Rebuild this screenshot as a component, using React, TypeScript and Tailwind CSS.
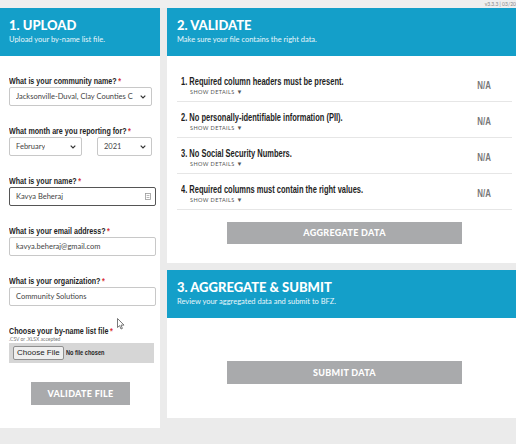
import type { ReactNode } from "react";

const blue = "bg-[#149fc9]";
// squeezed Liberation Sans bold stands in for the condensed label face
const narrow = "inline-block whitespace-nowrap font-['Liberation_Sans',Arial,sans-serif] font-bold scale-x-[0.75]";
const heavy = "font-['Lato',sans-serif] font-black";
const body = "font-['Lato','Open_Sans',sans-serif]";

const checks = [
  "1. Required column headers must be present.",
  "2. No personally-identifiable information (PII).",
  "3. No Social Security Numbers.",
  "4. Required columns must contain the right values."
];

const Header = ({ title, sub, padX }: { title: string; sub: string; padX: string }) => (
  <div className={`${blue} h-[48px] ${padX} pt-[9px] text-white`}>
    <div className={`${heavy} text-[13px] leading-[16px]`}>{title}</div>
    <div className={`${body} mt-[2px] text-[7.5px] leading-[10px] text-[#e8f6fb]`}>{sub}</div>
  </div>
);

const Label = ({ children }: { children: ReactNode }) => (
  <div className="h-[12px] text-[9.5px] leading-[12px] text-[#1e1e1e]">
    <span className={`${narrow} origin-left`}>
      {children}
      <span className="ml-[2px] text-[#d9343a]">*</span>
    </span>
  </div>
);

const Chevron = () => (
  <svg width="6" height="4" viewBox="0 0 6 4" className="shrink-0">
    <path d="M0.7 0.7 L3 3 L5.3 0.7" fill="none" stroke="#333" strokeWidth="1.2" />
  </svg>
);

const Select = ({ value, width }: { value: string; width: string }) => (
  <div
    className={`${width} flex h-[19px] items-center justify-between rounded-[2px] border border-[#c8c8c8] bg-white pl-[6px] pr-[5px]`}
  >
    <span className={`${body} truncate text-[7.5px] text-[#444]`}>{value}</span>
    <Chevron />
  </div>
);

const TextInput = ({ value, focused }: { value: string; focused?: boolean }) => (
  <div
    className={`flex h-[19px] w-[147px] items-center justify-between rounded-[2px] border bg-white pl-[6px] pr-[4px] ${
      focused ? "border-[#555]" : "border-[#c8c8c8]"
    }`}
  >
    <span className={`${body} text-[7.5px] text-[#444]`}>{value}</span>
    {focused ? (
      <svg width="6" height="7" viewBox="0 0 6 7">
        <rect x="0.5" y="0.5" width="5" height="6" fill="none" stroke="#999" strokeWidth="0.8" />
        <path d="M1.6 2.5 H4.4 M1.6 4.5 H4.4" stroke="#999" strokeWidth="0.7" />
      </svg>
    ) : null}
  </div>
);

const GrayButton = ({ label, width }: { label: string; width: string }) => (
  <div
    className={`${width} flex h-[23px] items-center justify-center bg-[#a9aaac] ${heavy} text-[9px] tracking-[0.3px] text-white`}
  >
    {label}
  </div>
);

export default function App() {
  return (
    <div className="relative h-[444px] w-[516px] overflow-hidden bg-[#ebebeb]">
      <div className="flex h-[8px] items-center justify-end whitespace-nowrap bg-[#efefef]">
        <span className={`${body} text-[5px] leading-[8px] text-[#888]`}>v3.3.3 | 03/20</span>
      </div>

      <div className="flex items-start gap-[7px]">
        {/* upload */}
        <section className="h-[420px] w-[160px] shrink-0 bg-white">
          <Header title="1. UPLOAD" sub="Upload your by-name list file." padX="px-[9px]" />
          <div className="pl-[9px] pr-[4px] pt-[19px]">
            <div className="mb-[19px]">
              <Label>What is your community name?</Label>
              <Select value="Jacksonville-Duval, Clay Counties C" width="w-[143px]" />
            </div>
            <div className="mb-[19px]">
              <Label>What month are you reporting for?</Label>
              <div className="flex gap-[15px]">
                <Select value="February" width="w-[73px]" />
                <Select value="2021" width="w-[55px]" />
              </div>
            </div>
            <div className="mb-[19px]">
              <Label>What is your name?</Label>
              <TextInput value="Kavya Beheraj" focused />
            </div>
            <div className="mb-[19px]">
              <Label>What is your email address?</Label>
              <TextInput value="kavya.beheraj@gmail.com" />
            </div>
            <div className="mb-[19px]">
              <Label>What is your organization?</Label>
              <TextInput value="Community Solutions" />
            </div>
            <div className="h-[11px] text-[9.5px] leading-[11px] text-[#1e1e1e]">
              <span className={`${narrow} origin-left`}>
                Choose your by-name list file
                <span className="ml-[2px] text-[#d9343a]">*</span>
              </span>
            </div>
            <div className={`${body} h-[7px] text-[5px] leading-[7px] text-[#777]`}>.CSV or .XLSX accepted</div>
            <div className="flex h-[20px] w-[145px] items-center gap-[2px] bg-[#d6d6d6] px-[4px]">
              <div className="flex h-[14px] items-center rounded-[2px] border border-[#8f8f8f] bg-[#efefef] px-[3px] font-['Liberation_Sans',sans-serif] text-[8px] text-[#222]">
                Choose File
              </div>
              <span className={`${narrow} origin-left text-[7.5px] text-[#1e1e1e]`}>No file chosen</span>
            </div>
            <div className="mt-[19px] pl-[22px]">
              <GrayButton label="VALIDATE FILE" width="w-[99px]" />
            </div>
          </div>
        </section>

        <div className="flex w-[355px] shrink-0 flex-col gap-[7px]">
          {/* validate */}
          <section className="h-[255px] bg-white">
            <Header title="2. VALIDATE" sub="Make sure your file contains the right data." padX="px-[10px]" />
            <div className="px-[10px] pt-[10px]">
              {checks.map((c) => (
                <div
                  key={c}
                  className="flex h-[36px] items-center overflow-hidden border-b border-[#e6e6e6] pb-[6px] pl-[4px] pt-[9px]"
                >
                  <div className="flex-1">
                    <div className="h-[12px] text-[10px] leading-[12px] text-[#1e1e1e]">
                      <span className={`${narrow} origin-left`}>{c}</span>
                    </div>
                    <div className={`${body} h-[8px] pl-[9px] pt-[1px] text-[5.5px] leading-[8px] tracking-[0.4px] text-[#555]`}>
                      SHOW DETAILS <span className="text-[6px] leading-none">▼</span>
                    </div>
                  </div>
                  <div className="w-[56px] text-center text-[10.5px] leading-[12px] text-[#777]">
                    <span className={`${narrow} origin-center`}>N/A</span>
                  </div>
                </div>
              ))}
              <div className="mt-[12px] flex justify-center">
                <div className={`flex h-[22px] w-[235px] items-center justify-center bg-[#a9aaac] ${heavy} text-[9px] tracking-[0.3px] text-white`}>
                  AGGREGATE DATA
                </div>
              </div>
            </div>
          </section>

          {/* submit */}
          <section className="h-[148px] bg-white">
            <Header title="3. AGGREGATE & SUBMIT" sub="Review your aggregated data and submit to BFZ." padX="px-[10px]" />
            <div className="flex justify-center pt-[43px]">
              <GrayButton label="SUBMIT DATA" width="w-[235px]" />
            </div>
          </section>
        </div>
      </div>

      {/* mouse pointer */}
      <svg className="absolute left-[117px] top-[318px]" width="8" height="12" viewBox="0 0 8 12">
        <path d="M0.5 0.5 L0.5 9.5 L2.6 7.6 L4 11 L5.4 10.4 L4 7.1 L7 7.1 Z" fill="white" stroke="#555" strokeWidth="0.8" />
      </svg>
    </div>
  );
}
